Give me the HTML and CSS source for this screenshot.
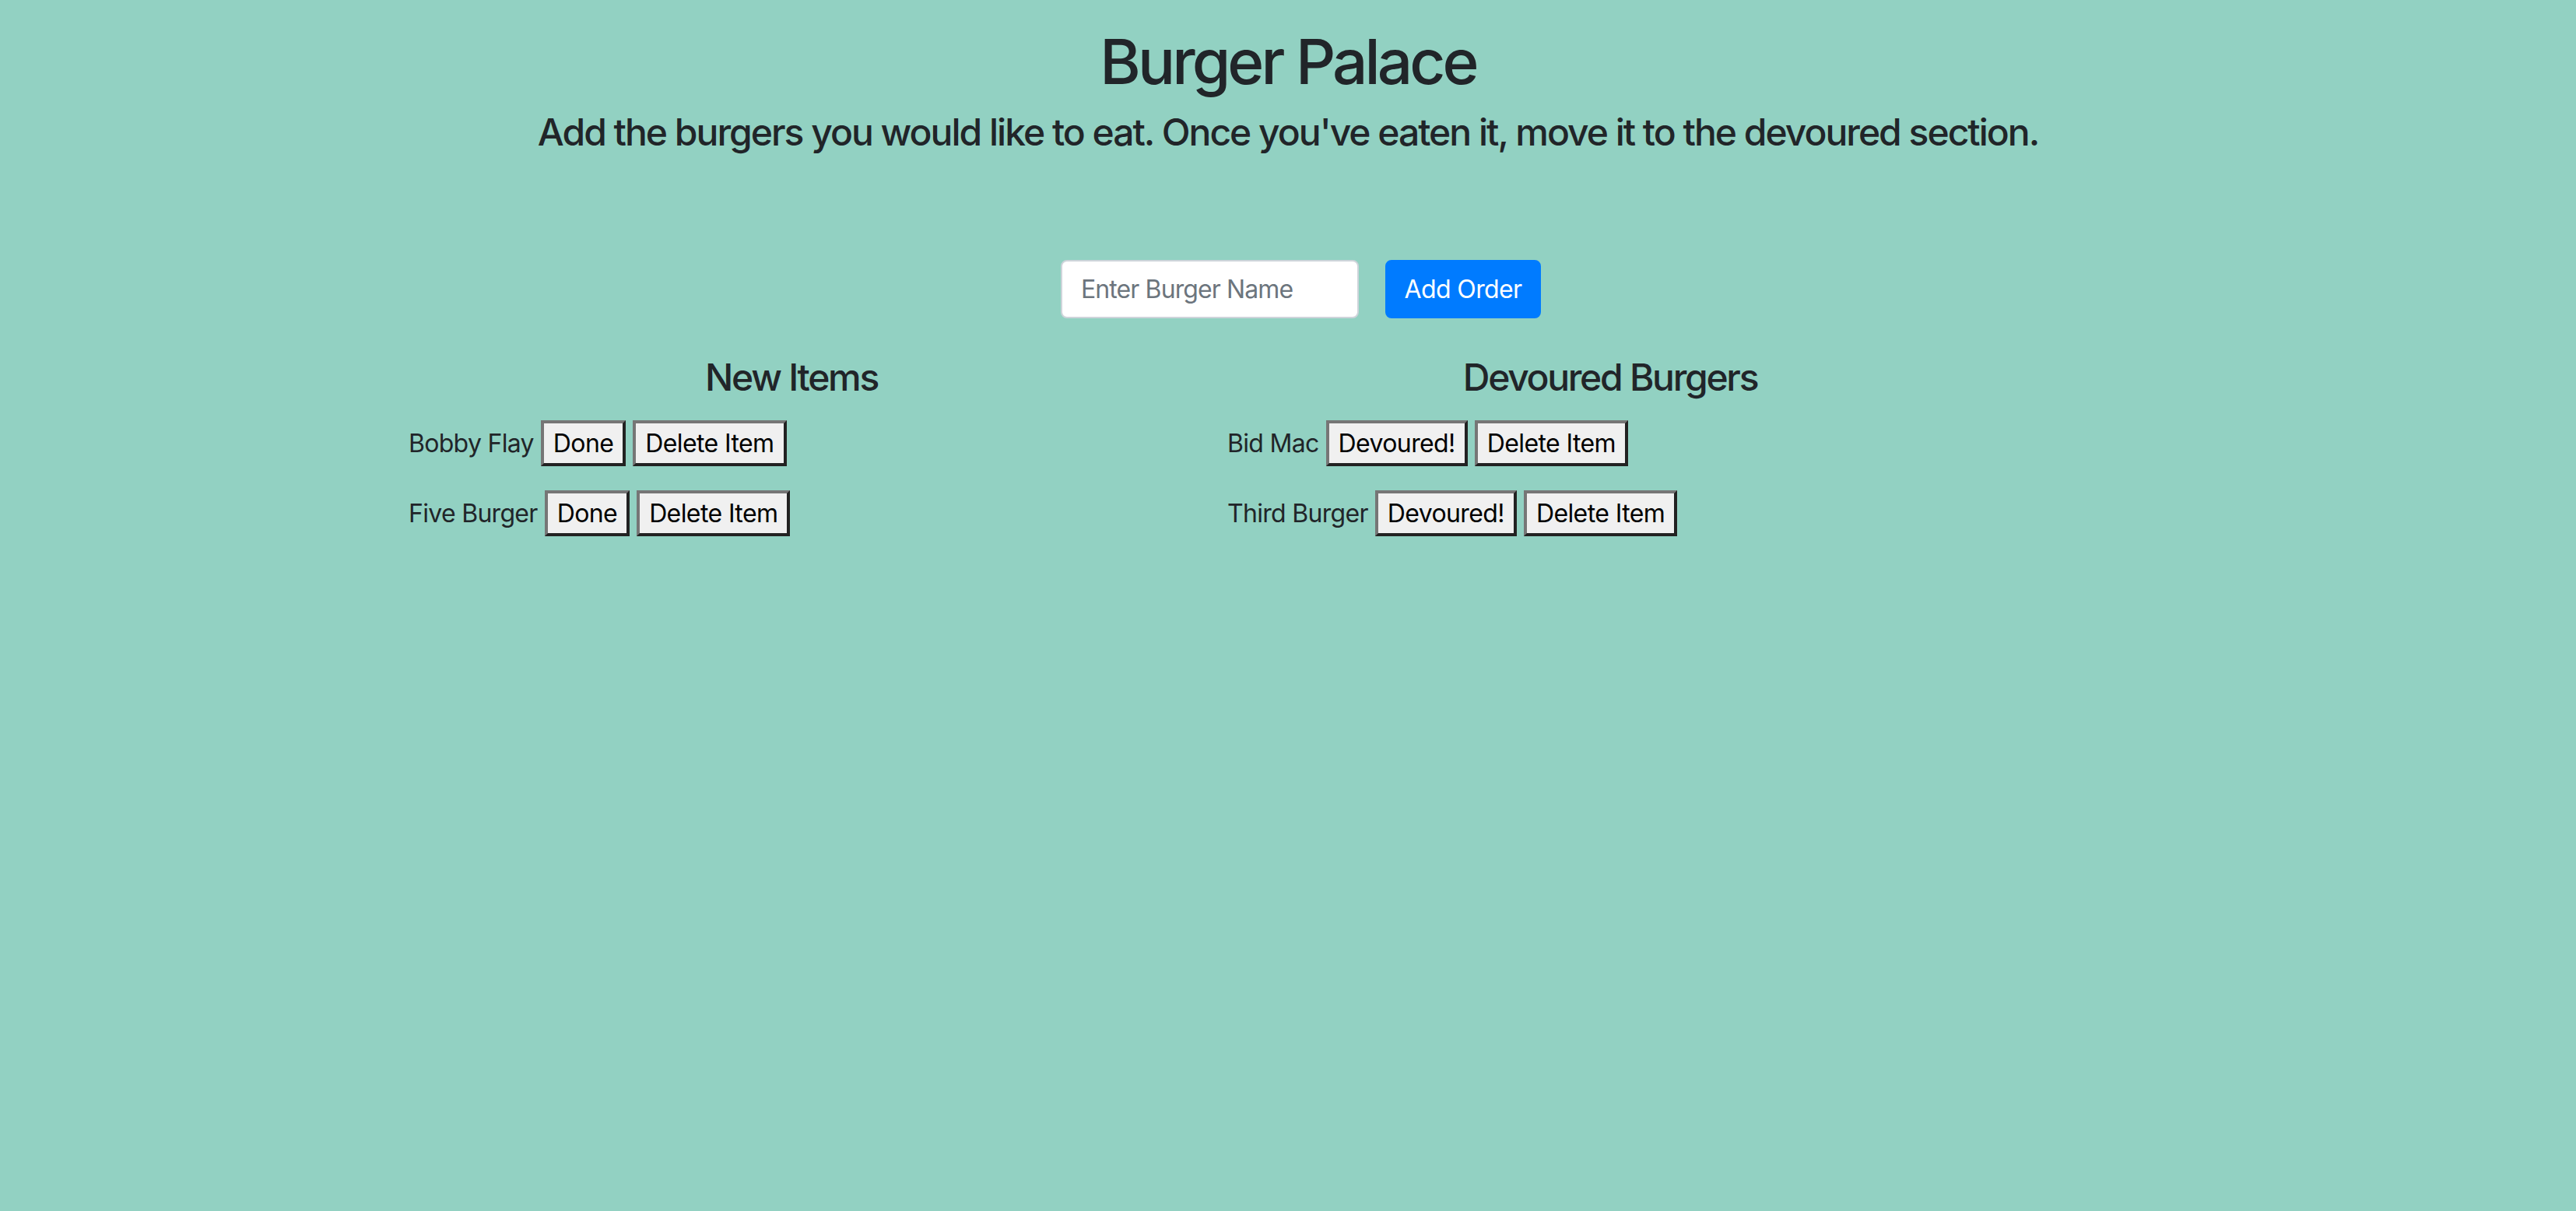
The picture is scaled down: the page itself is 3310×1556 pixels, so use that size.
FILE: index.html
```html
<!DOCTYPE html>
<html lang="en">
<head>
<meta charset="utf-8">
<title>Burger Palace</title>
<link rel="stylesheet" href="styles.css">
</head>
<body>
<header class="header">
  <h1 class="title">Burger Palace</h1>
  <h2 class="subtitle">Add the burgers you would like to eat. Once you've eaten it, move it to the devoured section.</h2>
</header>
<form class="order-form">
  <input class="order-input" type="text" placeholder="Enter Burger Name">
  <button class="order-btn" type="button">Add Order</button>
</form>
<main class="columns">
  <section class="column">
    <h3 class="col-title">New Items</h3>
    <div class="item"><span class="item-name">Bobby Flay</span><button class="item-btn" type="button">Done</button><button class="item-btn" type="button">Delete Item</button></div>
    <div class="item"><span class="item-name">Five Burger</span><button class="item-btn" type="button">Done</button><button class="item-btn" type="button">Delete Item</button></div>
  </section>
  <section class="column">
    <h3 class="col-title">Devoured Burgers</h3>
    <div class="item"><span class="item-name">Bid Mac</span><button class="item-btn" type="button">Devoured!</button><button class="item-btn" type="button">Delete Item</button></div>
    <div class="item"><span class="item-name">Third Burger</span><button class="item-btn" type="button">Devoured!</button><button class="item-btn" type="button">Delete Item</button></div>
  </section>
</main>
</body>
</html>
```
FILE: styles.css
```css
* { box-sizing: border-box; }
html, body {
  margin: 0;
  padding: 0;
}
body {
  background: #92d1c2;
  color: #212529;
  font-family: Inter, "Noto Sans", sans-serif;
  min-height: 1556px;
}
.header {
  text-align: center;
}
.title {
  margin: 31px 0 0;
  font-size: 80px;
  line-height: 96px;
  font-weight: 500;
  letter-spacing: -3.9px;
}
.subtitle {
  margin: 14px 0 0;
  font-size: 48px;
  line-height: 58px;
  font-weight: 500;
  letter-spacing: -2px;
}
.order-form {
  display: flex;
  justify-content: center;
  gap: 34px;
  margin: 135px 0 0;
  padding-left: 33px;
}
.order-input {
  width: 383px;
  height: 75px;
  border: 2px solid #ced4da;
  border-radius: 8px;
  padding: 0 24px;
  font-family: inherit;
  font-size: 32px;
  letter-spacing: -0.9px;
  color: #495057;
  background: #fff;
}
.order-input::placeholder {
  color: #6c757d;
}
.order-btn {
  width: 200px;
  height: 75px;
  border: 2px solid #007bff;
  border-radius: 8px;
  background: #007bff;
  color: #fff;
  font-family: inherit;
  font-size: 32px;
  letter-spacing: -0.6px;
  padding: 0;
}
.columns {
  display: flex;
  padding-left: 491px;
  margin-top: 47px;
}
.column {
  width: 1052px;
  padding: 0 30px;
}
.col-title {
  margin: 0 0 26px;
  text-align: center;
  font-size: 48px;
  line-height: 58px;
  font-weight: 500;
  letter-spacing: -2.3px;
}
.item {
  display: flex;
  align-items: center;
  gap: 9px;
  height: 59px;
  margin-bottom: 31px;
  font-size: 32px;
  letter-spacing: -0.7px;
}
.item-name {
  padding-left: 4px;
}
.item-btn {
  height: 59px;
  padding: 0 12px;
  font-family: inherit;
  font-size: 32px;
  letter-spacing: -0.6px;
  color: #000;
  background: #f0f0f0;
  border-style: solid;
  border-width: 4px;
  border-color: #767676 #222 #222 #767676;
  border-radius: 0;
}
```
